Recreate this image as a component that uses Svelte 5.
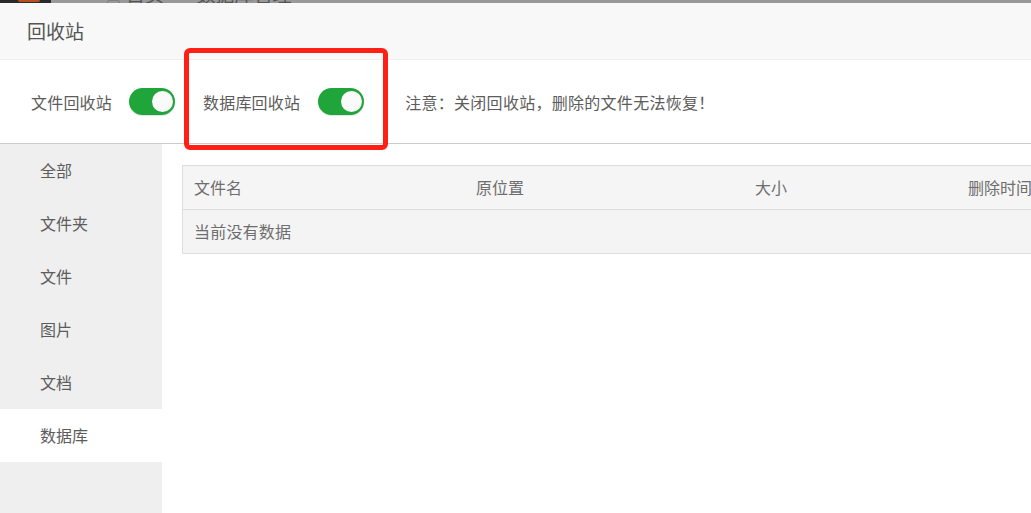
<script>
  const tabs = ['全部', '文件夹', '文件', '图片', '文档', '数据库'];
  const active = '数据库';
</script>

<div class="page">
  <div class="backdrop">
    <div class="logo"><span class="logo-dot"></span></div>
    <div class="crumbs">
      <span class="crumb-icon"></span>
      <span class="crumb home">首页</span>
      <span class="crumb sep">&gt;</span>
      <span class="crumb">数据库管理</span>
    </div>
  </div>

  <header class="title">回收站</header>

  <section class="settings">
    <span class="label">文件回收站</span>
    <span class="toggle first"><span class="knob"></span></span>
    <span class="label second">数据库回收站</span>
    <span class="toggle second-toggle"><span class="knob"></span></span>
    <span class="note">注意：关闭回收站，删除的文件无法恢复！</span>
  </section>

  <div class="body">
    <nav class="side">
      {#each tabs as t}
        <div class="tab" class:on={t === active}>{t}</div>
      {/each}
    </nav>
    <main class="content">
      <div class="table">
        <div class="row head">
          <span>文件名</span><span>原位置</span><span>大小</span><span>删除时间</span>
        </div>
        <div class="row empty">当前没有数据</div>
      </div>
    </main>
  </div>

  <div class="highlight"></div>
</div>

<style>
  :global(body) {
    margin: 0;
    background: #fff;
  }
  .page {
    position: relative;
    width: 1031px;
    height: 513px;
    overflow: hidden;
    display: flex;
    flex-direction: column;
    background: #fff;
    color: #555;
    font-family: "Noto Sans CJK SC", "Noto Sans", sans-serif;
    font-size: 16px;
  }
  .backdrop {
    height: 3px;
    flex: none;
    display: flex;
    background: #999;
    overflow: hidden;
  }
  .logo {
    width: 51px;
    height: 3px;
    background: #2b2b2b;
    overflow: hidden;
  }
  .logo-dot {
    display: block;
    width: 22px;
    height: 2px;
    margin-left: 18px;
    background: #b5511f;
    border-radius: 0 0 8px 8px;
  }
  .crumbs {
    display: flex;
    align-items: flex-end;
    height: 3px;
    margin-left: 56px;
  }
  .crumb-icon {
    flex: none;
    width: 11px;
    height: 2px;
    border: 1px solid #808080;
    border-bottom: 0;
    border-radius: 6px 6px 0 0;
    margin-right: 6px;
  }
  .crumb {
    flex: none;
    font-size: 19px;
    line-height: 19px;
    color: #555;
  }
  .sep {
    margin: 0 11px;
  }
  .title {
    flex: none;
    height: 57px;
    box-sizing: border-box;
    padding-left: 27px;
    line-height: 56px;
    font-size: 19px;
    background: #f8f8f8;
    border-bottom: 1px solid #eee;
  }
  .settings {
    flex: none;
    height: 84px;
    box-sizing: border-box;
    display: flex;
    align-items: center;
    padding-left: 31px;
    background: #fff;
    border-bottom: 1px solid #ccc;
  }
  .label {
    line-height: 24px;
    letter-spacing: 0.2px;
    color: #5c5c5c;
  }
  .second {
    margin-left: 28px;
  }
  .toggle {
    flex: none;
    width: 46px;
    height: 27px;
    border-radius: 14px;
    background: #20a53a;
    position: relative;
    box-shadow: 0 1px 1px rgba(0, 0, 0, 0.12);
  }
  .first {
    margin-left: 17px;
  }
  .second-toggle {
    margin-left: 18px;
  }
  .knob {
    position: absolute;
    top: 3px;
    right: 2px;
    width: 21px;
    height: 21px;
    border-radius: 50%;
    background: #fafafa;
  }
  .note {
    margin-left: 41px;
    white-space: nowrap;
    letter-spacing: 0.28px;
    color: #5c5c5c;
  }
  .body {
    flex: 1;
    display: flex;
    min-height: 0;
  }
  .side {
    flex: none;
    width: 162px;
    background: #efefef;
  }
  .tab {
    height: 53px;
    line-height: 53px;
    padding-left: 40px;
    color: #5c5c5c;
  }
  .tab.on {
    background: #fff;
  }
  .content {
    flex: 1;
    min-width: 0;
    padding: 21px 0 0 20px;
    overflow: hidden;
  }
  .table {
    width: 900px;
    box-sizing: border-box;
    border: 1px solid #ddd;
    background: #f4f4f4;
    color: #6e6e6e;
  }
  .row {
    height: 43px;
    line-height: 43px;
    padding-left: 11px;
  }
  .head {
    height: 44px;
    box-sizing: border-box;
    border-bottom: 1px solid #ddd;
    display: grid;
    grid-template-columns: 282px 279px 213px 1fr;
    background: #f5f5f5;
  }
  .empty {
    height: 43px;
    letter-spacing: 0.2px;
  }
  .highlight {
    position: absolute;
    left: 184px;
    top: 48px;
    width: 204px;
    height: 102px;
    box-sizing: border-box;
    border: 5px solid #ff2015;
    border-radius: 6px;
  }
</style>
